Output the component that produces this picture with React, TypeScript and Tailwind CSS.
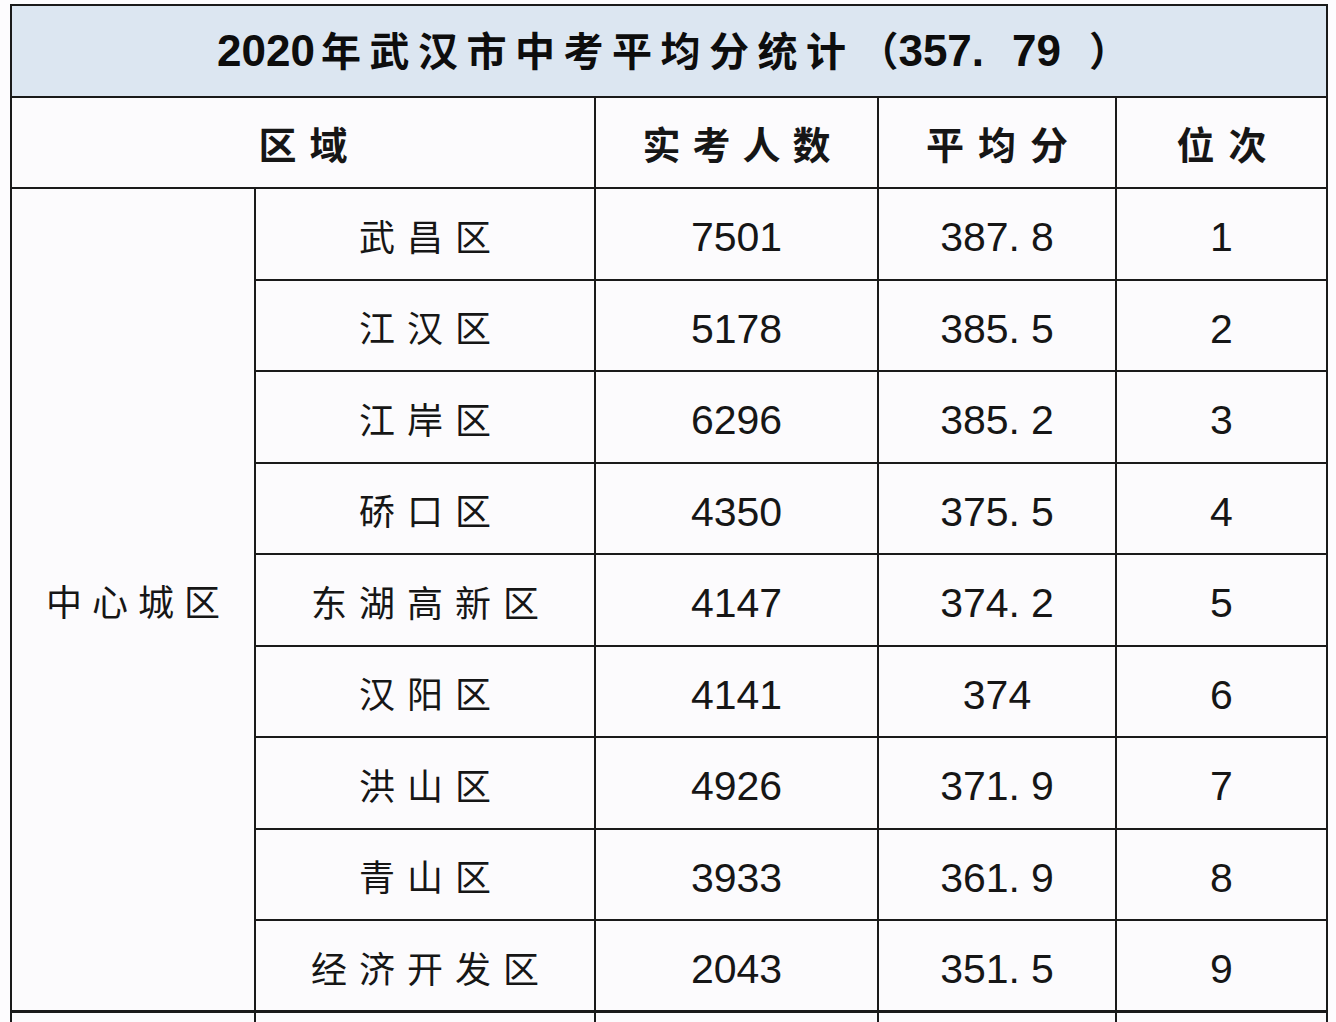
import React from "react";

const rows = [
  ["武昌区", "7501", "387.8", "1"],
  ["江汉区", "5178", "385.5", "2"],
  ["江岸区", "6296", "385.2", "3"],
  ["硚口区", "4350", "375.5", "4"],
  ["东湖高新区", "4147", "374.2", "5"],
  ["汉阳区", "4141", "374", "6"],
  ["洪山区", "4926", "371.9", "7"],
  ["青山区", "3933", "361.9", "8"],
  ["经济开发区", "2043", "351.5", "9"],
];

const cjk = { fontFamily: '"Noto Sans CJK SC", sans-serif' };
const num = { fontFamily: '"Liberation Sans", "Noto Sans CJK SC", sans-serif' };

function Score({ v }: { v: string }) {
  const idx = v.indexOf(".");
  if (idx < 0) return <>{v}</>;
  return (
    <>
      {v.slice(0, idx)}
      <span className="mr-[11px]">.</span>
      {v.slice(idx + 1)}
    </>
  );
}

export default function App() {
  return (
    <div className="w-[1336px] h-[1022px] overflow-hidden bg-[#fdfcfe] pl-[10px] pt-[4px]">
      <table className="table-fixed border-collapse w-[1316px] text-[#161616]">
        <colgroup>
          <col className="w-[244px]" />
          <col className="w-[340px]" />
          <col className="w-[283px]" />
          <col className="w-[238px]" />
          <col className="w-[211px]" />
        </colgroup>
        <tbody>
          <tr className="h-[92px]">
            <td
              colSpan={5}
              className="border-2 border-[#1a1a1a] bg-[#dce6f1] text-center font-bold p-0 whitespace-nowrap"
            >
              <span className="inline-flex items-baseline text-[#0d0d0d] ml-[8px]">
                <span className="text-[44px] leading-none" style={num}>2020</span>
                <span className="text-[40px] leading-none tracking-[8.5px] ml-[6px]" style={cjk}>
                  年武汉市中考平均分统计
                </span>
                <span className="text-[40px] leading-none ml-[4px]" style={cjk}>（</span>
                <span className="text-[44px] leading-none" style={num}>357.</span>
                <span className="text-[44px] leading-none ml-[28px]" style={num}>79</span>
                <span className="text-[40px] leading-none ml-[28px]" style={cjk}>）</span>
              </span>
            </td>
          </tr>
          <tr className="h-[91px]">
            <td
              colSpan={2}
              className="border-2 border-[#1a1a1a] bg-[#fcfbfd] text-center font-bold text-[38px] leading-none tracking-[13px] pl-[13px]"
              style={cjk}
            >
              区域
            </td>
            <td
              className="border-2 border-[#1a1a1a] bg-[#fcfbfd] text-center font-bold text-[38px] leading-none tracking-[12px] pl-[12px]"
              style={cjk}
            >
              实考人数
            </td>
            <td
              className="border-2 border-[#1a1a1a] bg-[#fcfbfd] text-center font-bold text-[38px] leading-none tracking-[14px] pl-[14px]"
              style={cjk}
            >
              平均分
            </td>
            <td
              className="border-2 border-[#1a1a1a] bg-[#fcfbfd] text-center font-bold text-[38px] leading-none tracking-[14px] pl-[14px]"
              style={cjk}
            >
              位次
            </td>
          </tr>
          {rows.map((r, i) => (
            <tr key={r[0]} className="h-[91.5px]">
              {i === 0 && (
                <td
                  rowSpan={9}
                  className="border-2 border-[#1a1a1a] bg-[#fcfbfd] text-center text-[36px] leading-none tracking-[10px] pl-[10px]"
                  style={cjk}
                >
                  中心城区
                </td>
              )}
              <td
                className="border-2 border-[#1a1a1a] bg-[#fcfbfd] text-center text-[36px] leading-none tracking-[12px] pl-[12px] pt-[2px]"
                style={cjk}
              >
                {r[0]}
              </td>
              <td className="border-2 border-[#1a1a1a] bg-[#fcfbfd] text-center text-[41px] leading-none pt-[8px]" style={num}>
                {r[1]}
              </td>
              <td className="border-2 border-[#1a1a1a] bg-[#fcfbfd] text-center text-[41px] leading-none pt-[8px]" style={num}>
                <Score v={r[2]} />
              </td>
              <td className="border-2 border-[#1a1a1a] bg-[#fcfbfd] text-center text-[41px] leading-none pt-[8px]" style={num}>
                {r[3]}
              </td>
            </tr>
          ))}
          <tr className="h-[91px]">
            <td className="border-2 border-t-[3px] border-[#1a1a1a] bg-[#fcfbfd]"></td>
            <td className="border-2 border-t-[3px] border-[#1a1a1a] bg-[#fcfbfd]"></td>
            <td className="border-2 border-t-[3px] border-[#1a1a1a] bg-[#fcfbfd]"></td>
            <td className="border-2 border-t-[3px] border-[#1a1a1a] bg-[#fcfbfd]"></td>
            <td className="border-2 border-t-[3px] border-[#1a1a1a] bg-[#fcfbfd]"></td>
          </tr>
        </tbody>
      </table>
    </div>
  );
}
